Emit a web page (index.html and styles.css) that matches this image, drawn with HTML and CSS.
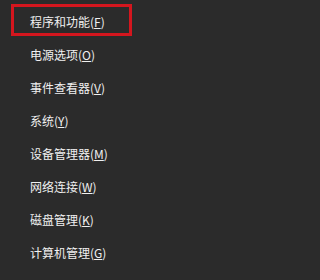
FILE: index.html
```html
<!DOCTYPE html>
<html lang="zh-CN">
<head>
<meta charset="utf-8">
<link rel="stylesheet" href="styles.css">
</head>
<body>
<ul class="menu">
  <li class="item marked">程序和功能(<u>F</u>)</li>
  <li class="item">电源选项(<u>O</u>)</li>
  <li class="item">事件查看器(<u>V</u>)</li>
  <li class="item">系统(<u>Y</u>)</li>
  <li class="item">设备管理器(<u>M</u>)</li>
  <li class="item">网络连接(<u>W</u>)</li>
  <li class="item">磁盘管理(<u>K</u>)</li>
  <li class="item">计算机管理(<u>G</u>)</li>
</ul>
</body>
</html>
```
FILE: styles.css
```css
html, body {
  margin: 0;
  padding: 0;
  background: #2b2b2b;
  height: 100%;
}
.menu {
  list-style: none;
  margin: 0;
  padding: 5px 0 0 0;
  display: flex;
  flex-direction: column;
}
.item {
  position: relative;
  height: 33px;
  display: flex;
  align-items: center;
  padding-left: 30px;
  font-family: "Noto Sans CJK SC", "Noto Sans", sans-serif;
  font-size: 12px;
  color: #f0f0f0;
  white-space: nowrap;
}
.item u {
  text-decoration: underline;
  text-underline-offset: 1px;
}
.marked::after {
  content: "";
  position: absolute;
  left: 11px;
  top: -1px;
  width: 121px;
  height: 32px;
  border: 3px solid #d4161e;
  box-sizing: border-box;
}
```
